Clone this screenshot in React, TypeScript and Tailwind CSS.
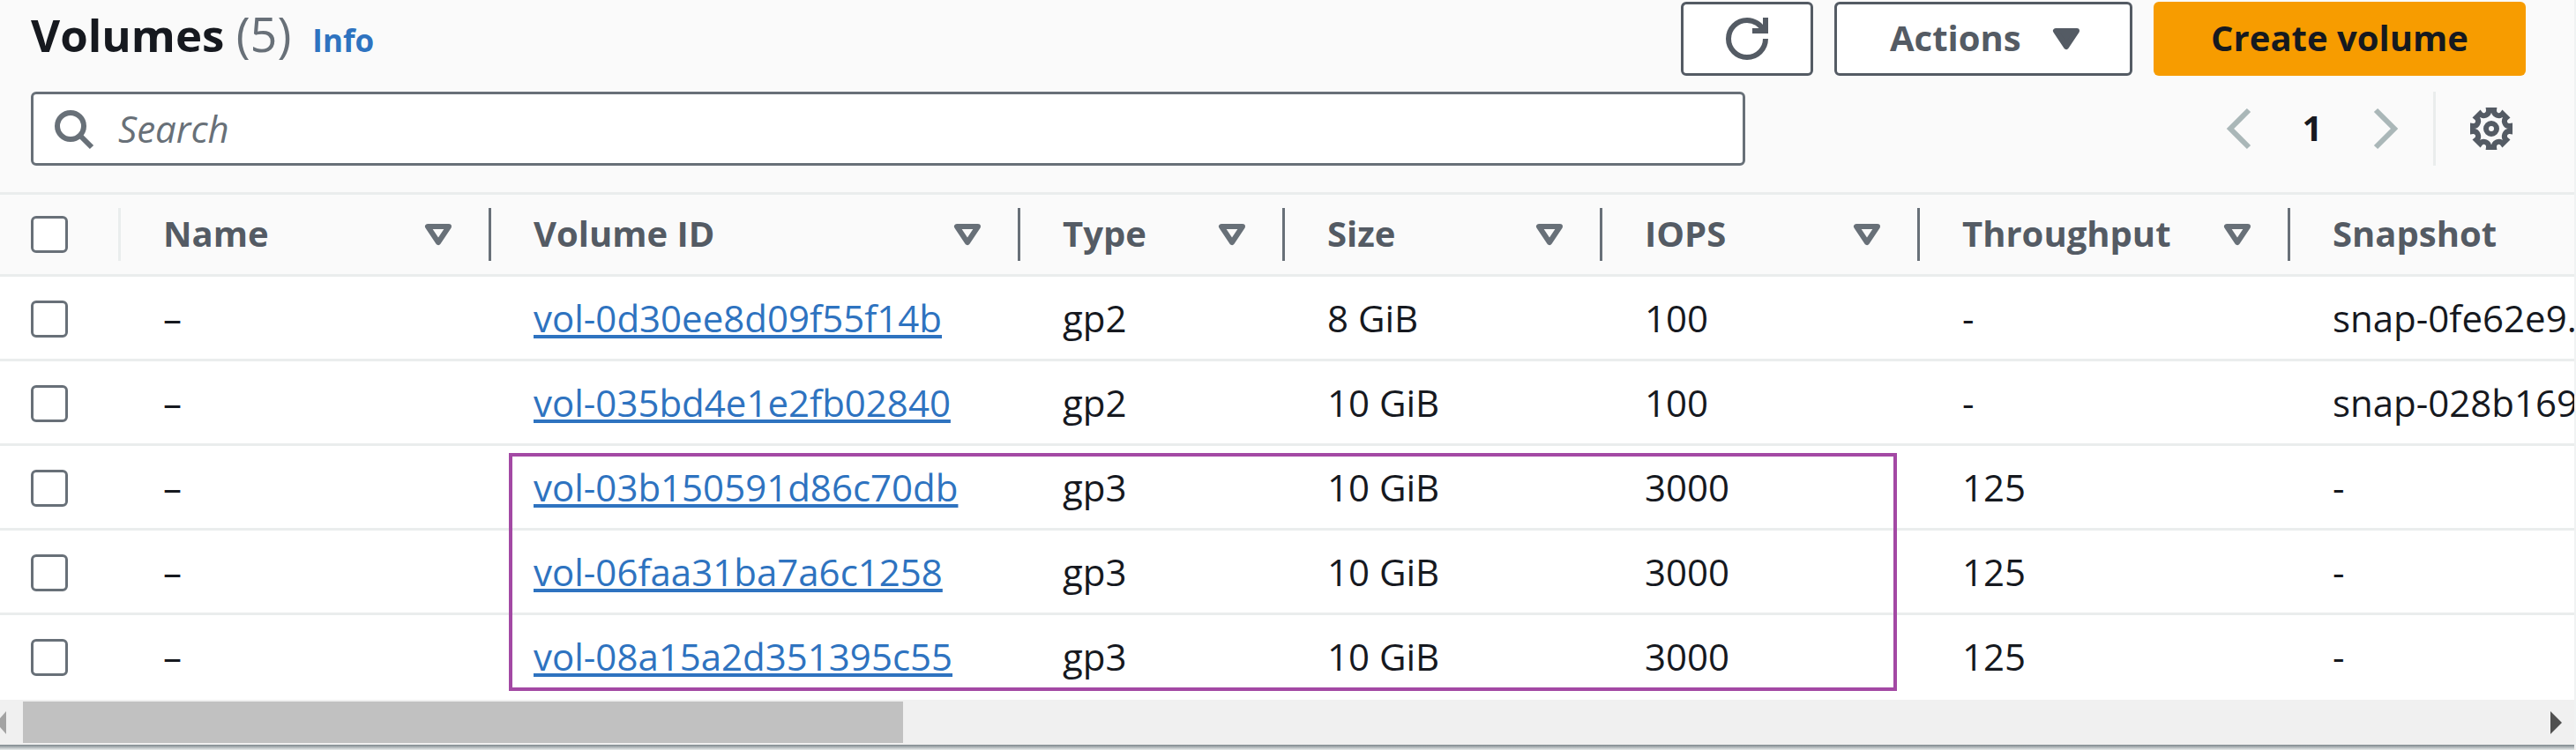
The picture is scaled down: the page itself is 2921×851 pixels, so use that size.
import React from "react";

type Column = { label: string; width: string };

const columns: Column[] = [
  { label: "Name", width: "w-[420px]" },
  { label: "Volume ID", width: "w-[600px]" },
  { label: "Type", width: "w-[300px]" },
  { label: "Size", width: "w-[360px]" },
  { label: "IOPS", width: "w-[360px]" },
  { label: "Throughput", width: "w-[420px]" },
  { label: "Snapshot", width: "w-[420px]" },
];

const volumes = [
  { name: "–", id: "vol-0d30ee8d09f55f14b", type: "gp2", size: "8 GiB", iops: "100", throughput: "-", snapshot: "snap-0fe62e9..." },
  { name: "–", id: "vol-035bd4e1e2fb02840", type: "gp2", size: "10 GiB", iops: "100", throughput: "-", snapshot: "snap-028b169..." },
  { name: "–", id: "vol-03b150591d86c70db", type: "gp3", size: "10 GiB", iops: "3000", throughput: "125", snapshot: "-" },
  { name: "–", id: "vol-06faa31ba7a6c1258", type: "gp3", size: "10 GiB", iops: "3000", throughput: "125", snapshot: "-" },
  { name: "–", id: "vol-08a15a2d351395c55", type: "gp3", size: "10 GiB", iops: "3000", throughput: "125", snapshot: "-" },
];

function RefreshIcon() {
  return (
    <svg viewBox="0 0 16 16" className="size-12" fill="none" stroke="currentColor" strokeWidth="2" aria-hidden="true">
      <path d="M15 8c0 3.87-3.13 7-7 7s-7-3.13-7-7 3.13-7 7-7c2.79 0 5.2 1.63 6.33 4" />
      <path d="M10 5h5V0" />
    </svg>
  );
}

function CaretIcon({ filled = false }: { filled?: boolean }) {
  return (
    <svg
      viewBox="0 0 16 16"
      className="size-12"
      fill={filled ? "currentColor" : "none"}
      stroke="currentColor"
      strokeWidth="2"
      strokeLinejoin="round"
      aria-hidden="true"
    >
      <path d="M4 5h8l-4 6z" />
    </svg>
  );
}

function ChevronIcon({ d }: { d: string }) {
  return (
    <svg viewBox="0 0 16 16" className="size-12" fill="none" stroke="currentColor" strokeWidth="2" aria-hidden="true">
      <path d={d} />
    </svg>
  );
}

function SearchIcon() {
  return (
    <svg viewBox="0 0 16 16" className="size-12 shrink-0" fill="none" stroke="currentColor" strokeWidth="2" aria-hidden="true">
      <circle cx="7" cy="7" r="5" />
      <path d="m15 15-4.5-4.5" />
    </svg>
  );
}

function GearIcon() {
  return (
    <svg viewBox="0 0 16 16" className="size-12" fill="none" stroke="currentColor" strokeWidth="2" aria-hidden="true">
      <path d="M7 1H9A1.82 1.82 0 0 0 12.24 2.34L13.66 3.76A1.82 1.82 0 0 0 15 7V9A1.82 1.82 0 0 0 13.66 12.24L12.24 13.66A1.82 1.82 0 0 0 9 15H7A1.82 1.82 0 0 0 3.76 13.66L2.34 12.24A1.82 1.82 0 0 0 1 9V7A1.82 1.82 0 0 0 2.34 3.76L3.76 2.34A1.82 1.82 0 0 0 7 1Z" />
      <circle cx="8" cy="8" r="2" />
    </svg>
  );
}

function Checkbox({ label }: { label: string }) {
  return (
    <input
      type="checkbox"
      aria-label={label}
      className="block size-[42px] appearance-none rounded-md border-3 border-[#687078] bg-white checked:bg-[#0073bb]"
    />
  );
}

export default function App() {
  return (
    <main className="overflow-hidden border-r-2 border-[#f0f2f2] bg-[#fafafa] font-['Open_Sans','Noto_Sans',sans-serif] text-[42px] leading-[60px] text-[#16191f]">
      <header className="flex items-start justify-between pt-[2px] pr-[55px] pl-[35px]">
        <div className="flex items-baseline">
          <h1 className="text-[51px] leading-[72px] font-bold">
            Volumes <span className="text-[54px] font-normal text-[#687078]">(5)</span>
          </h1>
          <a href="#info" className="ml-6 text-[35px] font-bold text-[#2e73c0]">
            Info
          </a>
        </div>
        <div className="flex gap-6 text-[40px] font-bold text-[#545b64]">
          <button
            type="button"
            aria-label="Refresh"
            className="flex h-[84px] w-[150px] items-center justify-center rounded-md border-3 border-[#545b64] bg-white"
          >
            <RefreshIcon />
          </button>
          <button
            type="button"
            className="flex h-[84px] w-[338px] items-center justify-between rounded-md border-3 border-[#545b64] bg-white pr-12 pl-[60px]"
          >
            <span className="pb-0.5">Actions</span>
            <CaretIcon filled />
          </button>
          <button type="button" className="h-[84px] w-[422px] rounded-md bg-[#f79c00] pb-0.5 text-[#16191f]">
            Create volume
          </button>
        </div>
      </header>

      <div className="flex items-center justify-between pt-[18px] pr-[55px] pb-[30px] pl-[35px]">
        <label className="flex h-[84px] w-[1944px] items-center gap-[27px] rounded-md border-3 border-[#687078] bg-white pl-[21px] text-[#687078]">
          <SearchIcon />
          <input
            type="search"
            aria-label="Search"
            placeholder="Search"
            className="min-w-0 grow bg-transparent outline-none placeholder:text-[#687078] placeholder:italic"
          />
        </label>
        <div className="flex items-center">
          <nav aria-label="Pagination" className="flex items-center">
            <button type="button" aria-label="Previous page" className="text-[#aab7b8]">
              <ChevronIcon d="M12 1 5 8l7 7" />
            </button>
            <button type="button" className="w-[120px] pb-0.5 text-center text-[40px] font-bold">
              1
            </button>
            <button type="button" aria-label="Next page" className="text-[#aab7b8]">
              <ChevronIcon d="m4 1 7 7-7 7" />
            </button>
          </nav>
          <button
            type="button"
            aria-label="Preferences"
            className="ml-[29px] flex h-[84px] items-center border-l-3 border-[#eaeded] pr-[15px] pl-[39px] text-[#545b64]"
          >
            <GearIcon />
          </button>
        </div>
      </div>

      <div className="relative">
        <div className="overflow-hidden">
          <table className="w-[3017px] table-fixed border-separate border-spacing-0 text-left">
            <thead>
              <tr className="h-24">
                <th className="w-[137px] border-y-3 border-[#eaeded] p-0">
                  <div className="flex h-[60px] items-center border-r-3 border-[#eaeded] pl-[35px]">
                    <Checkbox label="Select all volumes" />
                  </div>
                </th>
                {columns.map((column) => (
                  <th key={column.label} className={`${column.width} border-y-3 border-[#eaeded] p-0 text-[40px] font-bold text-[#545b64]`}>
                    <div className="flex h-[60px] items-center justify-between border-r-3 border-[#687078] pr-[33px] pl-12">
                      <span className="pb-0.5">{column.label}</span>
                      <button type="button" aria-label={`Sort by ${column.label}`} className="text-[#687078]">
                        <CaretIcon />
                      </button>
                    </div>
                  </th>
                ))}
              </tr>
            </thead>
            <tbody className="bg-white [&>tr:last-child>td]:border-transparent">
              {volumes.map((volume) => (
                <tr key={volume.id} className="h-24">
                  <td className="border-b-3 border-[#eaeded] p-0 pt-[3px] pl-[35px] align-middle">
                    <Checkbox label={`Select ${volume.id}`} />
                  </td>
                  <td className="border-b-3 border-[#eaeded] p-0 pl-12">{volume.name}</td>
                  <td className="border-b-3 border-[#eaeded] p-0 pl-12">
                    <a href={`#${volume.id}`} className="text-[#2e73c0] underline decoration-4 underline-offset-3">
                      {volume.id}
                    </a>
                  </td>
                  <td className="border-b-3 border-[#eaeded] p-0 pl-12">{volume.type}</td>
                  <td className="border-b-3 border-[#eaeded] p-0 pl-12">{volume.size}</td>
                  <td className="border-b-3 border-[#eaeded] p-0 pl-12">{volume.iops}</td>
                  <td className="border-b-3 border-[#eaeded] p-0 pl-12">{volume.throughput}</td>
                  <td className="border-b-3 border-[#eaeded] p-0 pl-12">{volume.snapshot}</td>
                </tr>
              ))}
            </tbody>
          </table>
        </div>
        <div className="pointer-events-none absolute bottom-[10px] left-[577px] h-[270px] w-[1574px] border-4 border-[#a349a4]" />
      </div>

      <div className="flex h-[51px] items-center bg-[#f0f0f0]">
        <svg viewBox="0 0 7 26" className="h-[26px] w-[7px] text-[#a3a3a3]" fill="currentColor" aria-hidden="true">
          <path d="M7 0v26L0 18V8z" />
        </svg>
        <div className="ml-[19px] h-[47px] w-[998px] bg-[#c1c1c1]" />
        <svg viewBox="0 0 13 26" className="mr-[14px] ml-auto h-[26px] w-[13px] text-[#505050]" fill="currentColor" aria-hidden="true">
          <path d="m0 0 13 13L0 26z" />
        </svg>
      </div>
      <div className="h-[6px] bg-linear-to-b from-[#7d878c] to-[#eaeded]" />
    </main>
  );
}
